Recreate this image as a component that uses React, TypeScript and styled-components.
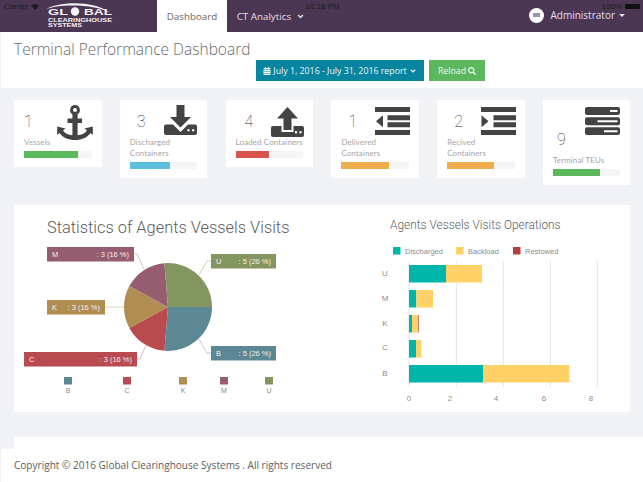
import React from 'react';
import styled, { createGlobalStyle } from 'styled-components';
import { FaCalendarAlt, FaSearch, FaAngleDown } from 'react-icons/fa';

const Global = createGlobalStyle`
  html, body { margin: 0; padding: 0; background: #f0f2f6; }
  body { width: 643px; height: 482px; overflow: hidden; font-family: "Open Sans", "Liberation Sans", sans-serif; }
  * { box-sizing: border-box; }
`;

const Page = styled.div`
  position: relative;
  width: 643px;
  height: 482px;
  overflow: hidden;
  display: flex;
  flex-direction: column;
`;

const Nav = styled.nav`
  height: 32px;
  flex: none;
  background: #4b3754;
  display: flex;
  align-items: stretch;
  color: #e4dfe8;
  font-size: 9.8px;
`;

const Brand = styled.div`
  width: 157px;
  padding: 2px 0 0 44px;
  flex: none;
`;

const Tab = styled.div<{ $active?: boolean }>`
  display: flex;
  align-items: center;
  gap: 5px;
  padding: 0 9.7px;
  background: ${p => (p.$active ? '#fff' : 'transparent')};
  color: ${p => (p.$active ? '#666' : '#e4dfe8')};
`;

const UserMenu = styled.div`
  margin-left: auto;
  display: flex;
  align-items: center;
  gap: 6px;
  padding: 0 18px 2px 0;
  line-height: 10px;
  font-size: 10px;
`;

const Avatar = styled.span`
  width: 15px;
  height: 15px;
  border-radius: 50%;
  background: #fff;
  display: flex;
  align-items: center;
  justify-content: center;
`;

const AvatarMark = styled.span`
  width: 7px;
  height: 4px;
  background: #8d9aa8;
`;

const Caret = styled.span`
  width: 0;
  height: 0;
  margin-left: -2px;
  border: 3px solid transparent;
  border-top-color: #e4dfe8;
  border-bottom: 0;
`;

const StatusBar = styled.div`
  position: absolute;
  top: 3px;
  left: 4px;
  right: 3px;
  height: 7px;
  display: flex;
  justify-content: space-between;
  align-items: center;
  font-family: "Liberation Sans", sans-serif;
  font-size: 8px;
  line-height: 7px;
  color: #1c1c1c;
`;

const StatusGroup = styled.span`
  display: flex;
  align-items: center;
  gap: 3px;
`;

const Clock = styled.span`
  margin-left: 4px;
`;

const Battery = styled.span`
  width: 15px;
  height: 5px;
  border-radius: 1px;
  background: #111;
`;

const Header = styled.header`
  height: 56px;
  flex: none;
  margin-left: 1px;
  background: #fff;
  padding: 7px 0 0 13px;
`;

const Title = styled.h1`
  margin: 0;
  height: 21px;
  font-size: 15.5px;
  line-height: 20px;
  font-weight: 300;
  color: #676a6c;
`;

const Actions = styled.div`
  display: flex;
  gap: 5px;
  margin: 0 0 0 242px;
  height: 21px;
`;

const Button = styled.div<{ $color: string; $w: number }>`
  width: ${p => p.$w}px;
  display: flex;
  align-items: center;
  justify-content: center;
  gap: 2px;
  background: ${p => p.$color};
  color: #eef5f6;
  font-size: 8.8px;
  white-space: nowrap;
`;

const Stats = styled.section`
  display: grid;
  grid-template-columns: repeat(6, 87.5px);
  column-gap: 18.3px;
  align-items: start;
  padding: 12px 0 0 14px;
  height: 117px;
  flex: none;
`;

const Card = styled.div`
  background: #fff;
  padding: 5px 10px 9px;
`;

const CardTop = styled.div<{ $stacked?: boolean }>`
  display: flex;
  height: ${p => (p.$stacked ? '50px' : '32px')};
  flex-direction: ${p => (p.$stacked ? 'column' : 'row')};
  align-items: ${p => (p.$stacked ? 'stretch' : 'flex-start')};
  justify-content: ${p => (p.$stacked ? 'flex-start' : 'space-between')};
`;

const Num = styled.span<{ $x: number; $y: number }>`
  font-family: "Roboto", "Lato", sans-serif;
  font-weight: 100;
  font-size: 16px;
  line-height: 20px;
  color: #333;
  margin: ${p => p.$y}px 0 0 ${p => p.$x}px;
`;

const Glyph = styled.svg<{ $top: number; $right: number }>`
  display: block;
  flex: none;
  fill: #444242;
  margin: ${p => p.$top}px ${p => p.$right}px 0 auto;
  overflow: visible;
`;

const Label = styled.div`
  font-family: "Lato", "Open Sans", sans-serif;
  font-size: 7.9px;
  line-height: 11px;
  color: #a4a4a4;
  letter-spacing: 0.15px;
  white-space: nowrap;
`;

const Track = styled.div`
  margin-top: 3px;
  height: 7px;
  background: #f5f5f5;
`;

const Fill = styled.div<{ $color: string }>`
  height: 100%;
  background: ${p => p.$color};
`;

const Panel = styled.section`
  margin: 0 13px 0 14px;
  height: 207px;
  flex: none;
  background: #fff;
  display: flex;
`;

const PieColumn = styled.div`
  width: 326px;
  flex: none;
`;

const BarColumn = styled.div`
  flex: 1;
`;

const ChartTitle = styled.h2<{ $x: number; $y: number; $size: number }>`
  margin: ${p => p.$y}px 0 0 ${p => p.$x}px;
  font-family: "Roboto", "Liberation Sans", sans-serif;
  font-weight: 300;
  font-size: ${p => p.$size}px;
  line-height: 20px;
  color: #5c5c5c;
  white-space: nowrap;
`;

const ChartSvg = styled.svg`
  display: block;
  font-family: "Liberation Sans", sans-serif;
`;

const LowerCard = styled.div`
  margin: 25px 0 0 14px;
  height: 12px;
  flex: none;
  background: #fff;
`;

const Footer = styled.footer`
  flex: 1;
  margin-left: 1px;
  background: #fff;
  padding: 0 0 1px 13px;
  display: flex;
  align-items: center;
  font-size: 10.05px;
  color: #5d5d5d;
`;

const slices = [
  { name: 'B', color: '#5c8896', from: 0, to: 94.7, legend: 64 },
  { name: 'C', color: '#b94a50', from: 94.7, to: 151.6, legend: 123 },
  { name: 'K', color: '#b08d50', from: 151.6, to: 208.4, legend: 179 },
  { name: 'M', color: '#965c70', from: 208.4, to: 265.3, legend: 220 },
  { name: 'U', color: '#84965f', from: 265.3, to: 360, legend: 265 },
];

const tags = [
  { name: 'M', value: ': 3 (16 %)', color: '#965c70', x: 47, y: 247, w: 87, line: '134,254 137,254 144,269' },
  { name: 'U', value: ': 5 (26 %)', color: '#84965f', x: 211, y: 254, w: 65, line: '211,261 207,261 199,275' },
  { name: 'K', value: ': 3 (16 %)', color: '#b08d50', x: 47, y: 300, w: 58, line: '105,307 124,307' },
  { name: 'C', value: ': 3 (16 %)', color: '#b94a50', x: 24, y: 352, w: 113, line: '137,359 140,359 146,345' },
  { name: 'B', value: ': 5 (26 %)', color: '#5c8896', x: 211, y: 346, w: 65, line: '211,353 207,353 199,339' },
];

function arc(from: number, to: number, cx: number, cy: number, r: number) {
  const rad = (d: number) => (d * Math.PI) / 180;
  const x1 = cx + r * Math.cos(rad(from));
  const y1 = cy + r * Math.sin(rad(from));
  const x2 = cx + r * Math.cos(rad(to));
  const y2 = cy + r * Math.sin(rad(to));
  const large = to - from > 180 ? 1 : 0;
  return `M${cx},${cy}L${x1},${y1}A${r},${r} 0 ${large} 1 ${x2},${y2}Z`;
}

const PieChart = () => (
  <ChartSvg width="326" height="174" viewBox="14 238 326 174">
    {tags.map(t => (
      <polyline key={t.name} points={t.line} fill="none" stroke={t.color} strokeOpacity="0.4" strokeWidth="1" />
    ))}
    {slices.map(s => (
      <path key={s.name} d={arc(s.from, s.to, 168, 307, 44)} fill={s.color} />
    ))}
    {tags.map(t => (
      <g key={t.name}>
        <rect x={t.x} y={t.y} width={t.w} height={14.5} fill={t.color} />
        <text x={t.x + 5} y={t.y + 10} fontSize="7.5" fill="#f3f0ee">{t.name}</text>
        <text x={t.x + t.w - 5} y={t.y + 10} fontSize="7.5" fill="#f3f0ee" textAnchor="end">{t.value}</text>
      </g>
    ))}
    {slices.map(s => (
      <g key={s.name}>
        <rect x={s.legend} y={377} width={8} height={7.5} fill={s.color} />
        <text x={s.legend + 4} y={393} fontSize="7" fill="#8a8a8a" textAnchor="middle">{s.name}</text>
      </g>
    ))}
  </ChartSvg>
);

const TEAL = '#00b5a9';
const YELLOW = '#ffd166';
const RED = '#b2403f';

const bars = [
  { name: 'U', y: 265, ly: 276, segs: [[409, 446, TEAL], [446, 482, YELLOW]] },
  { name: 'M', y: 290, ly: 301, segs: [[409, 416.3, TEAL], [416.3, 433, YELLOW]] },
  { name: 'K', y: 315, ly: 326, segs: [[409, 412, TEAL], [412, 418.3, YELLOW], [418.3, 419, RED]] },
  { name: 'C', y: 340, ly: 350, segs: [[409, 416, TEAL], [416, 421.3, YELLOW]] },
  { name: 'B', y: 365, ly: 376, segs: [[409, 483, TEAL], [483, 569.3, YELLOW]] },
] as const;

const BarChart = () => (
  <ChartSvg width="290" height="177" viewBox="340 235 290 177">
    {[
      { x: 393, c: TEAL, t: 'Discharged' },
      { x: 456, c: YELLOW, t: 'Backload' },
      { x: 513, c: RED, t: 'Restowed' },
    ].map(l => (
      <g key={l.t}>
        <rect x={l.x} y={247} width={7.5} height={7.5} fill={l.c} />
        <text x={l.x + 12} y={253.5} fontSize="7.5" fill="#8c8c8c">{l.t}</text>
      </g>
    ))}
    {[409, 456.3, 503.3, 550.3, 597.3].map(x => (
      <line key={x} x1={x} x2={x} y1={261} y2={387} stroke="#e3e3e3" strokeWidth="1" />
    ))}
    {bars.map(b => (
      <g key={b.name}>
        {b.segs.map(([a, z, c]) => (
          <rect key={c} x={a} y={b.y} width={z - a} height={17.5} fill={c} />
        ))}
        <text x={385} y={b.ly} fontSize="8" fill="#8c8c8c" textAnchor="middle">{b.name}</text>
      </g>
    ))}
    {([[409, '0'], [450, '2'], [496, '4'], [544, '6'], [591, '8']] as const).map(([x, t]) => (
      <text key={t} x={x} y={401} fontSize="8" fill="#8c8c8c" textAnchor="middle">{t}</text>
    ))}
  </ChartSvg>
);

const AnchorIcon = () => (
  <Glyph $top={0} $right={-1} width="36" height="35" viewBox="0 0 36 35">
    <path fillRule="evenodd" d="M18 0a5 5 0 0 1 2.6 9.2V13.500H25V18H20.600V30.300C25 29.800 28.500 28 30 25.500L27.500 23.500 35.800 21.500V30L33.500 28C30.500 32.500 24.500 35 18 35S5.500 32.500 2.500 28L.2 30V21.500L8.500 23.500 6 25.500C7.500 28 11 29.800 15.400 30.300V18H10.500V13.500H15.400V9.200A5 5 0 0 1 18 0ZM18 3a2 2 0 1 0 0 4 2 2 0 0 0 0-4Z" />
  </Glyph>
);

const DownloadIcon = () => (
  <Glyph $top={0} $right={0} width="33" height="30" viewBox="0 0 33 30">
    <path fillRule="evenodd" d="M12.500 0H20.500V12H27L16.500 22.500 6 12H12.500ZM2 19.500H9L16.500 27 24 19.500H31A2 2 0 0 1 33 21.500V28A2 2 0 0 1 31 30H2A2 2 0 0 1 0 28V21.500A2 2 0 0 1 2 19.500ZM24.500 24A1.200 1.200 0 1 0 24.500 26.400 1.200 1.200 0 0 0 24.500 24ZM29.200 24A1.200 1.200 0 1 0 29.200 26.400 1.200 1.200 0 0 0 29.200 24Z" />
  </Glyph>
);

const UploadIcon = () => (
  <Glyph $top={2} $right={-1} width="33" height="30" viewBox="0 0 33 30">
    <path fillRule="evenodd" d="M16.500 0 27 11.500H20.500V23H12.500V11.500H6ZM2 19H10.500V25H22.500V19H31A2 2 0 0 1 33 21V28A2 2 0 0 1 31 30H2A2 2 0 0 1 0 28V21A2 2 0 0 1 2 19ZM25 24A1.200 1.200 0 1 0 25 26.400 1.200 1.200 0 0 0 25 24ZM29.500 24A1.200 1.200 0 1 0 29.500 26.400 1.200 1.200 0 0 0 29.500 24Z" />
  </Glyph>
);

const OutdentIcon = () => (
  <Glyph $top={2} $right={-1} width="35" height="28" viewBox="0 0 35 28">
    <path d="M0 .5Q0 0 .5 0H34.500Q35 0 35 .5V5H0ZM12.500 8.300H35V13.300H12.500ZM12.500 15.300H35V20.300H12.500ZM0 23H35V27.500Q35 28 34.500 28H.5Q0 28 0 27.500ZM1 14.300 8 8.300V20.300Z" />
  </Glyph>
);

const IndentIcon = () => (
  <Glyph $top={2} $right={-1} width="35" height="28" viewBox="0 0 35 28">
    <path d="M0 .5Q0 0 .5 0H34.500Q35 0 35 .5V5H0ZM12.500 8.300H35V13.300H12.500ZM12.500 15.300H35V20.300H12.500ZM0 23H35V27.500Q35 28 34.500 28H.5Q0 28 0 27.500ZM7.500 14.300 .5 8.300V20.300Z" />
  </Glyph>
);

const ServerIcon = () => (
  <Glyph $top={2} $right={0} width="35" height="28" viewBox="0 0 35 28">
    <path fillRule="evenodd" d="M2 0H33A2 2 0 0 1 35 2V6A2 2 0 0 1 33 8H2A2 2 0 0 1 0 6V2A2 2 0 0 1 2 0ZM25 3V5H32.500V3ZM2 10.200H33A2 2 0 0 1 35 12.200V16.200A2 2 0 0 1 33 18.200H2A2 2 0 0 1 0 16.200V12.200A2 2 0 0 1 2 10.200ZM12.500 13.200V15.200H32.500V13.200ZM2 20.300H33A2 2 0 0 1 35 22.300V26A2 2 0 0 1 33 28H2A2 2 0 0 1 0 26V22.300A2 2 0 0 1 2 20.300ZM19 23.200V25.200H32.500V23.200Z" />
  </Glyph>
);

const stats = [
  { n: '1', x: 0, y: 7, label: ['Vessels'], icon: <AnchorIcon />, color: '#5cb85c', pct: 80 },
  { n: '3', x: 7, y: 7, label: ['Discharged', 'Containers'], icon: <DownloadIcon />, color: '#5bc0de', pct: 60 },
  { n: '4', x: 9, y: 7, label: ['Loaded Containers'], icon: <UploadIcon />, color: '#d9534f', pct: 50 },
  { n: '1', x: 7, y: 7, label: ['Delivered', 'Containers'], icon: <OutdentIcon />, color: '#f0ad4e', pct: 70 },
  { n: '2', x: 7, y: 7, label: ['Recived', 'Containers'], icon: <IndentIcon />, color: '#f0ad4e', pct: 70 },
  { n: '9', x: 4, y: -5, label: ['Terminal TEUs'], icon: <ServerIcon />, color: '#5cb85c', pct: 70, stacked: true },
];

const Logo = () => (
  <svg width="70" height="28" viewBox="44 2 70 28" fill="#f4f1f5" fontFamily="Liberation Sans" fontWeight="700">
    <path d="M46 9.500C58 .5 98 .5 110.500 13.500C98 4 58 3.500 46 9.500Z" />
    <text x="48" y="15" fontSize="9.500" textLength="20" lengthAdjust="spacingAndGlyphs">GL</text>
    <circle cx="75" cy="11.500" r="4.200" />
    <text x="84" y="15" fontSize="9.500" textLength="28" lengthAdjust="spacingAndGlyphs">BAL</text>
    <text x="48" y="22" fontSize="4.800" textLength="64" lengthAdjust="spacingAndGlyphs">CLEARINGHOUSE</text>
    <text x="48" y="27" fontSize="4.800" textLength="34" lengthAdjust="spacingAndGlyphs">SYSTEMS</text>
  </svg>
);

const App = () => (
  <Page>
    <Global />
    <Nav>
      <Brand><Logo /></Brand>
      <Tab $active>Dashboard</Tab>
      <Tab>CT Analytics <FaAngleDown size={9} /></Tab>
      <UserMenu>
        <Avatar><AvatarMark /></Avatar>
        Administrator
        <Caret />
      </UserMenu>
    </Nav>
    <StatusBar>
      <StatusGroup>Carrier
        <svg width="8" height="6" viewBox="0 0 8 6"><path d="M4 6 0 2C2-.5 6-.5 8 2Z" fill="#1c1c1c" /></svg>
      </StatusGroup>
      <Clock>10:18 PM</Clock>
      <StatusGroup>100% <Battery /></StatusGroup>
    </StatusBar>
    <Header>
      <Title>Terminal Performance Dashboard</Title>
      <Actions>
        <Button $color="#07849f" $w={168}>
          <FaCalendarAlt size={8} /> July 1, 2016 - July 31, 2016 report <FaAngleDown size={8} />
        </Button>
        <Button $color="#5cb85c" $w={56}>Reload <FaSearch size={8} /></Button>
      </Actions>
    </Header>
    <Stats>
      {stats.map(s => (
        <Card key={s.label.join()}>
          <CardTop $stacked={s.stacked}>
            {!s.stacked && <Num $x={s.x} $y={s.y}>{s.n}</Num>}
            {s.icon}
            {s.stacked && <Num $x={s.x} $y={s.y}>{s.n}</Num>}
          </CardTop>
          {s.label.map(l => <Label key={l}>{l}</Label>)}
          <Track><Fill $color={s.color} style={{ width: `${s.pct}%` }} /></Track>
        </Card>
      ))}
    </Stats>
    <Panel>
      <PieColumn>
        <ChartTitle $x={33} $y={13} $size={16.4}>Statistics of Agents Vessels Visits</ChartTitle>
        <PieChart />
      </PieColumn>
      <BarColumn>
        <ChartTitle $x={50} $y={10} $size={11.9}>Agents Vessels Visits Operations</ChartTitle>
        <BarChart />
      </BarColumn>
    </Panel>
    <LowerCard />
    <Footer>Copyright © 2016 Global Clearinghouse Systems . All rights reserved</Footer>
  </Page>
);

export default App;
